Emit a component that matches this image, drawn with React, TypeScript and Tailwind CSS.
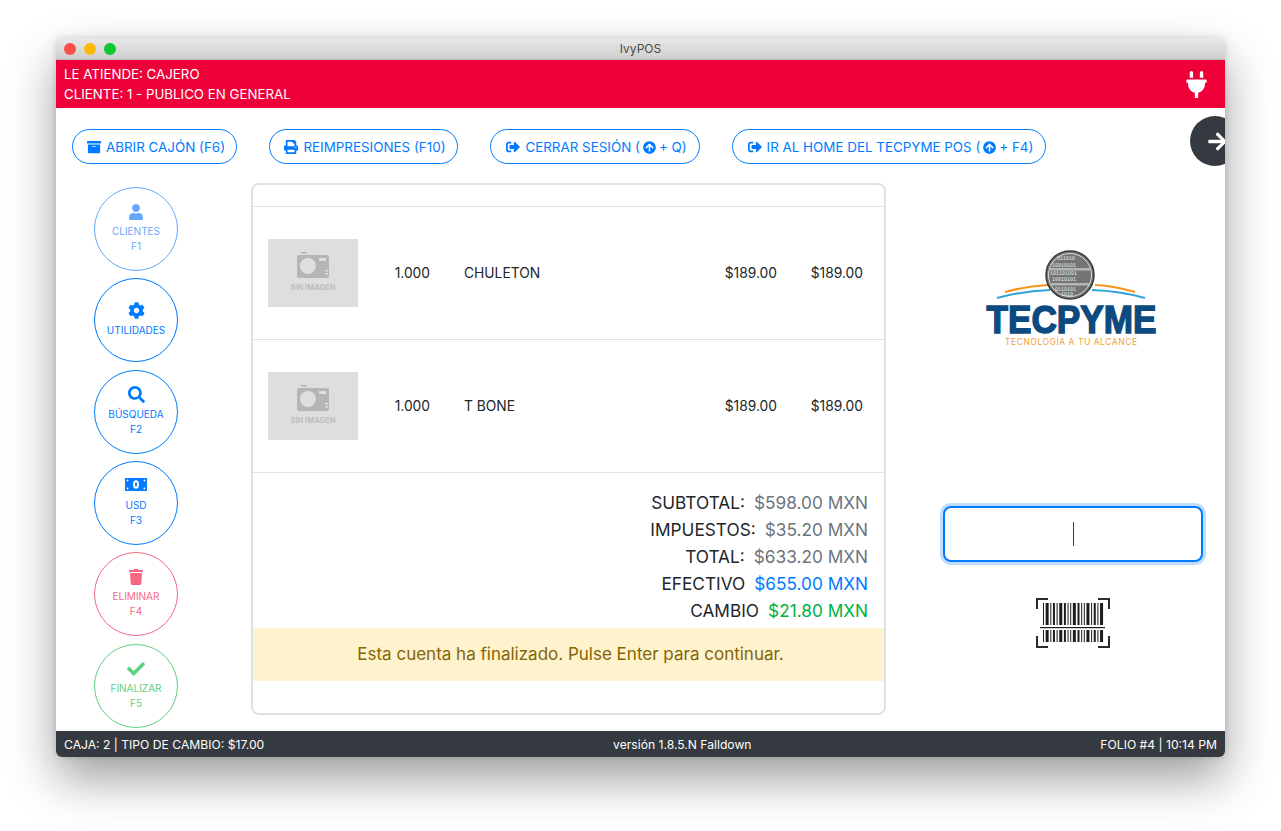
import React from 'react';
import {
  FaArchive,
  FaArrowCircleUp,
  FaArrowRight,
  FaCheck,
  FaCog,
  FaPlug,
  FaPrint,
  FaSearch,
  FaSignOutAlt,
  FaTrash,
  FaUser,
} from 'react-icons/fa';

const font = { fontFamily: 'Inter, "Liberation Sans", sans-serif' };

const MoneyIcon = () => (
  <svg width="22" height="13" viewBox="0 0 22 13" className="-translate-y-[1px]">
    <rect width="22" height="13" fill="currentColor" />
    <ellipse cx="11" cy="6.5" rx="3" ry="4.2" fill="#fff" />
    <ellipse cx="11" cy="6.5" rx="1" ry="2.2" fill="currentColor" />
    <circle cx="2.5" cy="2.5" r="0.9" fill="#fff" />
    <circle cx="19.5" cy="2.5" r="0.9" fill="#fff" />
    <circle cx="2.5" cy="10.5" r="0.9" fill="#fff" />
    <circle cx="19.5" cy="10.5" r="0.9" fill="#fff" />
  </svg>
);

const sideButtons = [
  { icon: <FaUser size={16} />, label: 'CLIENTES', key: 'F1', tone: 'border-[#66a9ff] text-[#66a9ff]' },
  { icon: <FaCog size={17} />, label: 'UTILIDADES', key: '', tone: 'border-[#007bff] text-[#007bff]' },
  { icon: <FaSearch size={17} />, label: 'BÚSQUEDA', key: 'F2', tone: 'border-[#007bff] text-[#007bff]' },
  { icon: <MoneyIcon />, label: 'USD', key: 'F3', tone: 'border-[#007bff] text-[#007bff]' },
  { icon: <FaTrash size={16} />, label: 'ELIMINAR', key: 'F4', tone: 'border-[#f56783] text-[#f56783]' },
  { icon: <FaCheck size={18} />, label: 'FINALIZAR', key: 'F5', tone: 'border-[#5fd07f] text-[#5fd07f]' },
];

const items = [
  { qty: '1.000', name: 'CHULETON', price: '$189.00', total: '$189.00' },
  { qty: '1.000', name: 'T BONE', price: '$189.00', total: '$189.00' },
];

const totals = [
  { label: 'SUBTOTAL:', value: '$598.00 MXN', tone: 'text-[#6c757d]' },
  { label: 'IMPUESTOS:', value: '$35.20 MXN', tone: 'text-[#6c757d]' },
  { label: 'TOTAL:', value: '$633.20 MXN', tone: 'text-[#6c757d]' },
  { label: 'EFECTIVO', value: '$655.00 MXN', tone: 'text-[#007bff]' },
  { label: 'CAMBIO', value: '$21.80 MXN', tone: 'text-[#00b140]' },
];

const barWidths = [1, 3, 1, 2, 1, 3, 2, 1, 1, 3, 2, 1, 1, 3, 1, 2, 1, 3];

const binaryRows: [number, number, string][] = [
  [72, 10, '011010'],
  [67, 17, '10010101'],
  [65, 25, '101101001'],
  [67, 31, '10010101'],
  [70, 41, '0110101'],
  [76, 46, '1010'],
];

const PillButton: React.FC<{ width: string; children: React.ReactNode }> = ({ width, children }) => (
  <button className={`flex h-[35px] ${width} items-center justify-center gap-[5px] rounded-full border border-[#007bff] pt-px pl-[3px] text-[13.4px] whitespace-nowrap text-[#007bff]`}>
    {children}
  </button>
);

const NoImage = () => (
  <div className="flex h-[68px] w-[90px] shrink-0 flex-col items-center bg-[#dedede] pt-[13px]">
    <svg width="32" height="26" viewBox="0 0 32 26">
      <rect x="4" y="0" width="6" height="1.5" fill="#b5b5b5" />
      <rect x="0" y="3" width="32" height="23" rx="2" fill="#b5b5b5" />
      <circle cx="11" cy="14" r="8" fill="#dedede" />
      <rect x="22" y="6" width="7" height="3" fill="#dedede" />
      <rect x="28" y="18" width="3" height="1.5" fill="#dedede" />
      <rect x="28" y="21" width="3" height="1.5" fill="#dedede" />
    </svg>
    <span className="mt-[5px] text-[7.5px] leading-[9px] font-bold text-[#bdbdbd]">SIN IMAGEN</span>
  </div>
);

const Logo = () => (
  <svg width="176" height="100" viewBox="0 0 176 100" className="shrink-0 overflow-visible">
    <path d="M20 42 Q 42 36 63 35" stroke="#f7941d" strokeWidth="2" fill="none" />
    <path d="M110 35 Q 130 36 150 42" stroke="#f7941d" strokeWidth="2" fill="none" />
    <path d="M12 48 Q 38 41 65 40" stroke="#2ea3dc" strokeWidth="2" fill="none" />
    <path d="M107 40 Q 135 41 160 48" stroke="#2ea3dc" strokeWidth="2" fill="none" />
    <circle cx="85" cy="25" r="24" fill="#747474" stroke="#3c3c3c" strokeWidth="1.5" />
    <circle cx="85" cy="25" r="21.5" fill="none" stroke="#d9d9d9" strokeWidth="1" />
    <rect x="65" y="18" width="40" height="2.5" fill="#b5b5b5" />
    <rect x="65" y="33" width="40" height="2.5" fill="#b5b5b5" />
    {binaryRows.map(([x, y, digits]) => (
      <text key={y} x={x} y={y} fontSize="5" fill="#e8e8e8" fontFamily="Liberation Mono, monospace">
        {digits}
      </text>
    ))}
    <text x="86.5" y="83" textAnchor="middle" fontSize="39" fontWeight="900" fill="#0d4a80" stroke="#0d4a80" strokeWidth="1.5" fontFamily="Liberation Sans, sans-serif" textLength="170" lengthAdjust="spacingAndGlyphs">
      TECPYME
    </text>
    <text x="86" y="95" textAnchor="middle" fontSize="8.5" fill="#f0a040" fontFamily="Inter, sans-serif" textLength="132" lengthAdjust="spacing">
      TECNOLOGÍA A TU ALCANCE
    </text>
  </svg>
);

const Barcode = () => {
  let x = 7;
  return (
    <svg width="74" height="51" viewBox="0 0 74 51" className="shrink-0">
      <path d="M1 12V2h11M62 2h11v10M1 39v11h11M62 50h11V39" fill="none" stroke="#2b2b2b" strokeWidth="2" />
      {barWidths.map((w, i) => {
        const bar = (
          <g key={i}>
            <rect x={x} y="6" width={w} height="22" fill="#1c1c1c" />
            <rect x={x} y="33" width={w} height="12" fill="#1c1c1c" />
          </g>
        );
        x += w + 1.65;
        return bar;
      })}
      <rect x="4" y="30" width="65" height="1.2" fill="#1c1c1c" />
    </svg>
  );
};

export default function App() {
  return (
    <div className="h-[831px] w-[1281px] overflow-hidden bg-white pt-[38px] pl-[56px]" style={font}>
      <div className="relative flex h-[719px] w-[1169px] flex-col overflow-hidden rounded-[6px] bg-white shadow-[0_22px_48px_rgba(0,0,0,0.38),0_0_6px_rgba(0,0,0,0.15)]">
        {/* barra de titulo */}
        <div className="relative flex h-[22px] shrink-0 items-center justify-center border-b border-[#b8b8b8] bg-gradient-to-b from-[#e8e8e8] to-[#cfcfcf]">
          <div className="absolute top-[5px] left-[8px] flex gap-[8px]">
            <span className="h-[12px] w-[12px] rounded-full bg-[#fc4e48]" />
            <span className="h-[12px] w-[12px] rounded-full bg-[#fdb908]" />
            <span className="h-[12px] w-[12px] rounded-full bg-[#10c92f]" />
          </div>
          <span className="text-[12px] text-[#4a4a4a]">IvyPOS</span>
        </div>

        {/* encabezado */}
        <div className="flex h-[48px] shrink-0 items-center justify-between bg-[#ef0038] pr-[15px] pl-[8px] text-[13.3px] leading-[20px] text-white">
          <div>
            <div>LE ATIENDE: CAJERO</div>
            <div>CLIENTE: 1 - PUBLICO EN GENERAL</div>
          </div>
          <FaPlug size={27} />
        </div>

        <div className="relative flex min-h-0 flex-1 flex-col">
          <button className="absolute top-[8px] left-[1134px] flex h-[50px] w-[50px] items-center rounded-full bg-[#343a40] pl-[17px] text-white">
            <FaArrowRight size={21} className="shrink-0" />
          </button>

          {/* acciones */}
          <div className="mt-[21px] ml-[16px] flex gap-[32px]">
            <PillButton width="w-[165px]">
              <FaArchive size={14} /> ABRIR CAJÓN (F6)
            </PillButton>
            <PillButton width="w-[189px]">
              <FaPrint size={14} /> REIMPRESIONES (F10)
            </PillButton>
            <PillButton width="w-[210px]">
              <FaSignOutAlt size={14} /> CERRAR SESIÓN (<FaArrowCircleUp size={13} className="-mx-[2px]" /> + Q)
            </PillButton>
            <PillButton width="w-[314px]">
              <FaSignOutAlt size={14} /> IR AL HOME DEL TECPYME POS (<FaArrowCircleUp size={13} className="-mx-[2px]" /> + F4)
            </PillButton>
          </div>

          <div className="mt-[19px] flex">
            {/* botones laterales */}
            <div className="mt-[4px] flex h-[540.6px] w-[195px] shrink-0 flex-col justify-between pl-[38px]">
              {sideButtons.map((b) => (
                <button
                  key={b.label}
                  className={`flex h-[84px] w-[84px] flex-col items-center justify-center rounded-full border pb-px text-[10px] leading-[15px] ${b.tone}`}
                >
                  <span className="mb-[3px] flex h-[18px] items-center">{b.icon}</span>
                  <span>{b.label}</span>
                  {b.key && <span>{b.key}</span>}
                </button>
              ))}
            </div>

            {/* cuenta */}
            <div className="flex h-[532px] w-[635px] shrink-0 flex-col rounded-[8px] border-2 border-[#dee2e6]">
              <div className="h-[22px] shrink-0 border-b border-[#dee2e6]" />
              {items.map((item) => (
                <div key={item.name} className="flex h-[133px] shrink-0 items-center border-b border-[#dee2e6] pr-[21px] pl-[15px] text-[13.8px] text-[#212529]">
                  <NoImage />
                  <span className="w-[72px] pt-px text-right">{item.qty}</span>
                  <span className="ml-[34px] flex-1 pt-px">{item.name}</span>
                  <span className="pt-px">{item.price}</span>
                  <span className="w-[86px] pt-px text-right">{item.total}</span>
                </div>
              ))}
              <div className="flex flex-col items-end pt-[16px] pr-[16px] text-[17.25px] leading-[27px] text-[#212529]">
                {totals.map((t) => (
                  <div key={t.label} className="flex gap-[9px]">
                    <span>{t.label}</span>
                    <span className={t.tone}>{t.value}</span>
                  </div>
                ))}
              </div>
              <div className="mt-[4px] flex h-[53px] items-center justify-center bg-[#fff3cd] pl-[4px] text-[17px] text-[#856404]">
                Esta cuenta ha finalizado. Pulse Enter para continuar.
              </div>
            </div>

            {/* logo y captura */}
            <div className="ml-[57px] flex w-[260px] shrink-0 flex-col items-center pt-[67px]">
              <Logo />
              <div className="mt-[156px] flex h-[56px] w-[260px] shrink-0 items-center justify-center rounded-[8px] border-2 border-[#007bff] bg-white shadow-[0_0_0_3px_rgba(0,123,255,0.25)]">
                <span className="h-[24px] w-px bg-[#343a40]" />
              </div>
              <div className="mt-[35px]">
                <Barcode />
              </div>
            </div>
          </div>
        </div>

        {/* pie */}
        <div className="flex h-[26px] shrink-0 items-center justify-between bg-[#343a40] px-[8px] pt-[2px] text-[12.15px] text-white">
          <span>CAJA: 2 | TIPO DE CAMBIO: $17.00</span>
          <span>versión 1.8.5.N Falldown</span>
          <span>FOLIO #4 | 10:14 PM</span>
        </div>
      </div>
    </div>
  );
}
